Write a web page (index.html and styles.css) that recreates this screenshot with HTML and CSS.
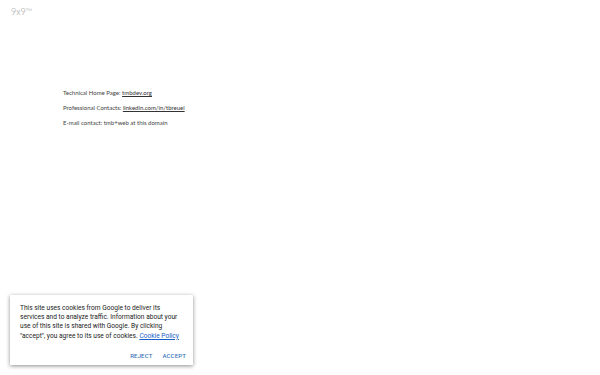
FILE: index.html
```html
<!DOCTYPE html>
<html>
<head>
<meta charset="utf-8">
<link rel="stylesheet" href="styles.css">
</head>
<body>
<header class="brand">9x9™</header>
<main class="content">
  <p>Technical Home Page: <a href="#">tmbdev.org</a></p>
  <p>Professional Contacts: <a href="#">linkedin.com/in/tbreuel</a></p>
  <p>E-mail contact: tmb+web at this domain</p>
</main>
<div class="cookie">
  <div class="cookie-text">This site uses cookies from Google to deliver its services and to analyze traffic. Information about your use of this site is shared with Google. By clicking "accept", you agree to its use of cookies. <a href="#">Cookie Policy</a></div>
  <div class="cookie-actions">
    <span class="btn">REJECT</span>
    <span class="btn">ACCEPT</span>
  </div>
</div>
</body>
</html>
```
FILE: styles.css
```css
html, body { margin: 0; padding: 0; background: #fff; }
body { font-family: Lato, "Open Sans", sans-serif; width: 600px; height: 375px; position: relative; overflow: hidden; }
.brand { position: absolute; left: 11px; top: 6px; font-size: 9px; color: #999; font-weight: 300; }
.content { padding: 90px 0 0 63px; font-size: 6px; color: #444; }
.content p { margin: 0 0 9.2px 0; line-height: 6px; }
.content a { color: #333; text-decoration: underline; }
.cookie { position: absolute; left: 10px; top: 295px; width: 183px; height: 70px; box-sizing: border-box; background: #fff; box-shadow: 0 1px 4px rgba(0,0,0,0.45); font-family: Roboto, sans-serif; padding: 9px 10px 0 10px; display: flex; flex-direction: column; }
.cookie-text { font-size: 6.6px; line-height: 9.2px; color: #212121; }
.cookie-text a { color: #1a5ec7; text-decoration: underline; }
.cookie-actions { display: flex; justify-content: flex-end; gap: 10px; margin-top: 11px; margin-right: -3px; }
.btn { font-size: 6px; font-weight: 500; color: #3e76bc; letter-spacing: 0.15px; }
```
